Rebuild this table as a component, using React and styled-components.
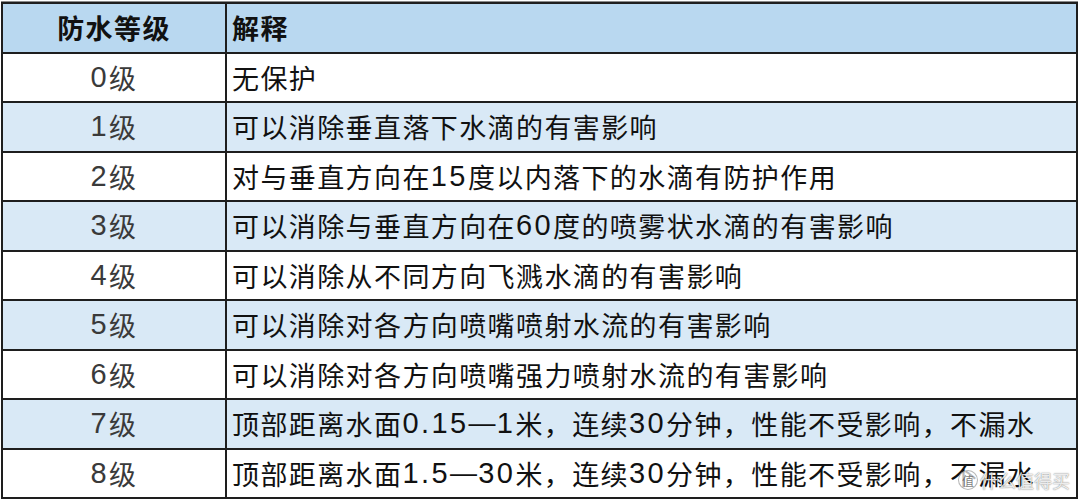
import React from 'react'
import styled, { createGlobalStyle } from 'styled-components'

const rows = [
  { level: '0级', text: '无保护' },
  { level: '1级', text: '可以消除垂直落下水滴的有害影响' },
  { level: '2级', text: '对与垂直方向在15度以内落下的水滴有防护作用' },
  { level: '3级', text: '可以消除与垂直方向在60度的喷雾状水滴的有害影响' },
  { level: '4级', text: '可以消除从不同方向飞溅水滴的有害影响' },
  { level: '5级', text: '可以消除对各方向喷嘴喷射水流的有害影响' },
  { level: '6级', text: '可以消除对各方向喷嘴强力喷射水流的有害影响' },
  { level: '7级', text: '顶部距离水面0.15—1米，连续30分钟，性能不受影响，不漏水' },
  { level: '8级', text: '顶部距离水面1.5—30米，连续30分钟，性能不受影响，不漏水' }
]

const GlobalStyle = createGlobalStyle`
  html, body {
    margin: 0;
    padding: 0;
    background: #ffffff;
  }
  body {
    font-family: "Liberation Sans", "Noto Sans CJK SC", sans-serif;
  }
`

const Page = styled.div`
  position: relative;
  width: 1080px;
  height: 503px;
  padding: 1px 0 0 1px;
  box-sizing: border-box;
`

const Grid = styled.div`
  display: grid;
  grid-template-columns: 222px 1fr;
  grid-template-rows: repeat(10, 1fr);
  gap: 2px;
  width: 1077px;
  height: 498px;
  box-sizing: border-box;
  padding: 2px;
  background: #1e1e1e;
  border-top: 1px solid #8a8a8a;
`

const Cell = styled.div`
  display: flex;
  align-items: center;
  justify-content: ${({ center }) => (center ? 'center' : 'flex-start')};
  padding-left: ${({ center }) => (center ? '0' : '5px')};
  background: ${({ tone }) =>
    tone === 'head' ? '#b9d8f0' : tone === 'alt' ? '#d9e9f6' : '#ffffff'};
  color: ${({ center, tone }) => (tone === 'head' ? '#111' : center ? '#3a3a3a' : '#111')};
  font-size: 27px;
  font-weight: ${({ tone }) => (tone === 'head' ? 700 : 400)};
  letter-spacing: 1.4px;
  white-space: nowrap;
  overflow: hidden;
`

const Num = styled.span`
  font-size: 29px;
  letter-spacing: 2.4px;
`

const Watermark = styled.div`
  position: absolute;
  right: 10px;
  bottom: 10px;
  display: flex;
  align-items: center;
  gap: 2px;
  color: rgba(255, 255, 255, 0.85);
  font-size: 18px;
  font-family: "Noto Sans CJK SC", sans-serif;
  text-shadow: 0 0 1px rgba(0, 0, 0, 0.45), 0 0 2px rgba(0, 0, 0, 0.25);
  pointer-events: none;
`

const Badge = styled.span`
  display: inline-flex;
  align-items: center;
  justify-content: center;
  width: 18px;
  height: 18px;
  border-radius: 50%;
  border: 1px solid rgba(120, 120, 120, 0.55);
  background: rgba(255, 255, 255, 0.7);
  font-size: 12px;
  color: rgba(90, 90, 90, 0.8);
  text-shadow: none;
`

function renderText(text) {
  return text.split(/([0-9.]+)/).map((part, i) =>
    /^[0-9.]+$/.test(part) ? <Num key={i}>{part}</Num> : part
  )
}

export default function App() {
  return (
    <Page>
      <GlobalStyle />
      <Grid>
        <Cell tone="head" center>防水等级</Cell>
        <Cell tone="head">解释</Cell>
        {rows.map((row, idx) => {
          const tone = idx % 2 === 1 ? 'alt' : 'plain'
          return (
            <React.Fragment key={row.level}>
              <Cell tone={tone} center>{renderText(row.level)}</Cell>
              <Cell tone={tone}>{renderText(row.text)}</Cell>
            </React.Fragment>
          )
        })}
      </Grid>
      <Watermark>
        <Badge>值</Badge>
        什么值得买
      </Watermark>
    </Page>
  )
}
